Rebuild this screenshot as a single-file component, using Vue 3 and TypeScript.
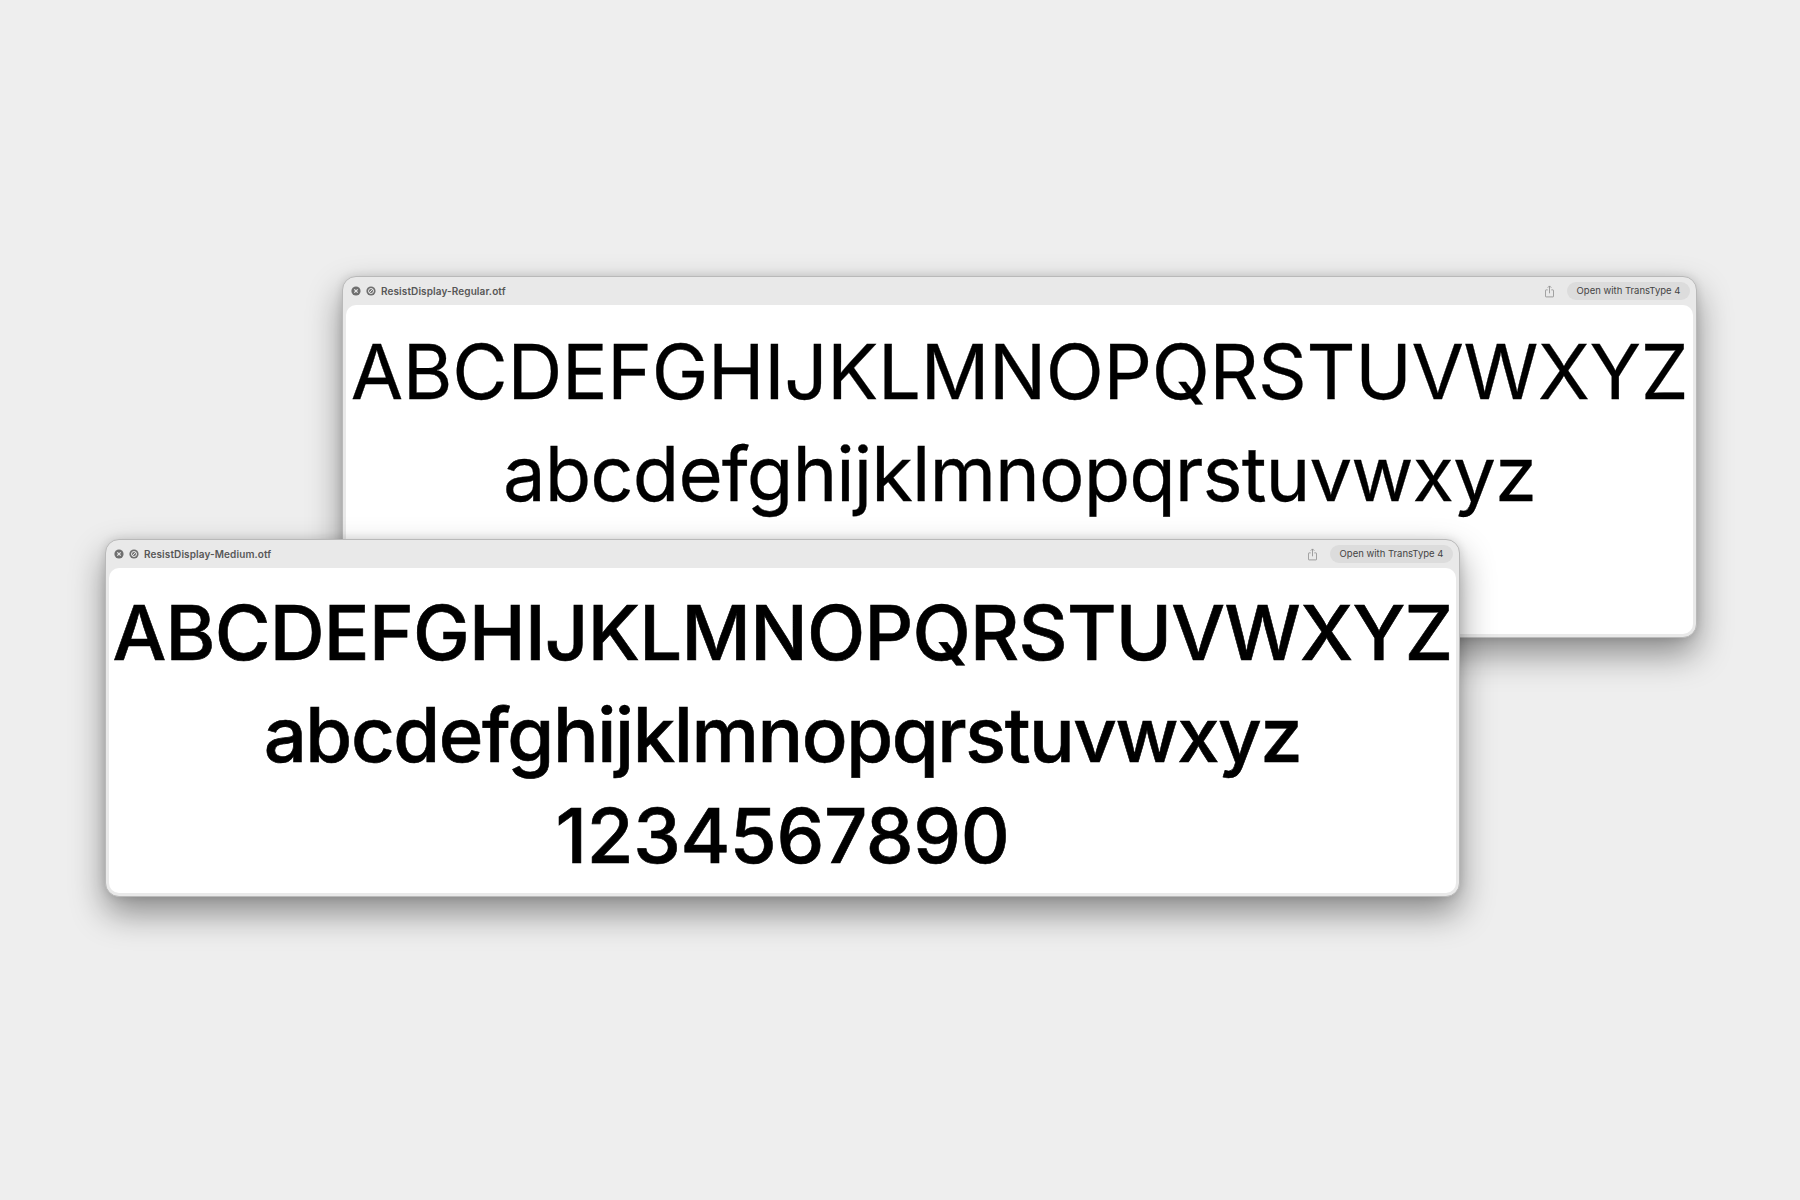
<script setup lang="ts">
interface FontWindow {
  file: string
  kind: string
  digits: boolean
}
const windows: FontWindow[] = [
  { file: 'ResistDisplay-Regular.otf', kind: 'regular', digits: false },
  { file: 'ResistDisplay-Medium.otf', kind: 'medium', digits: true },
]
</script>

<template>
  <main class="desk">
    <section v-for="w in windows" :key="w.file" class="window" :class="w.kind">
      <header class="bar">
        <svg class="ctl" viewBox="0 0 10 10">
          <circle cx="5" cy="5" r="4.6" fill="#6f6f6f" />
          <path d="M3.3 3.3l3.4 3.4M6.7 3.3l-3.4 3.4" stroke="#e8e8e8" stroke-width="1.2" fill="none" />
        </svg>
        <svg class="ctl" viewBox="0 0 10 10">
          <circle cx="5" cy="5" r="4.6" fill="#6f6f6f" />
          <circle cx="5" cy="5" r="2.5" stroke="#e8e8e8" stroke-width="1" fill="none" />
          <path d="M3.2 6.8l3.6-3.6" stroke="#e8e8e8" stroke-width="1" fill="none" />
        </svg>
        <span class="name">{{ w.file }}</span>
        <svg class="share" viewBox="0 0 10 14">
          <path d="M3 5.2H1.2a.7.7 0 0 0-.7.7v6.4a.7.7 0 0 0 .7.7h7.6a.7.7 0 0 0 .7-.7V5.9a.7.7 0 0 0-.7-.7H7" fill="none" stroke="#8c8c8c" stroke-width=".9" />
          <path d="M5 9V1M3 2.8L5 .8l2 2" fill="none" stroke="#8c8c8c" stroke-width=".9" />
        </svg>
        <span class="open">Open with TransType 4</span>
      </header>
      <div class="sheet">
        <p class="line upper">ABCDEFGHIJKLMNOPQRSTUVWXYZ</p>
        <p class="line lower">abcdefghijklmnopqrstuvwxyz</p>
        <p v-if="w.digits" class="line digits">1234567890</p>
      </div>
    </section>
  </main>
</template>

<style scoped>
.desk {
  position: relative;
  width: 1800px;
  height: 1200px;
  overflow: hidden;
  background: #eeeeee;
  font-family: Inter, "Liberation Sans", sans-serif;
}
.window {
  position: absolute;
  box-sizing: border-box;
  width: 1355px;
  height: 362px;
  display: flex;
  flex-direction: column;
  background: #e9e9e9;
  border: 1px solid #b9b9b9;
  border-radius: 14px;
  box-shadow: 0 16px 34px rgba(0, 0, 0, 0.42), 0 0 10px rgba(0, 0, 0, 0.12);
}
.regular { left: 342px; top: 276px; }
.medium { left: 105px; top: 539px; height: 358px; }
.bar {
  flex: none;
  box-sizing: border-box;
  height: 28px;
  display: flex;
  align-items: center;
  padding: 0 6px 0 8px;
}
.ctl {
  width: 10px;
  height: 10px;
  margin-right: 5px;
}
.name {
  font-size: 10px;
  font-weight: 600;
  color: #575757;
  letter-spacing: 0.1px;
}
.share {
  width: 9px;
  height: 13px;
  margin-left: auto;
  margin-right: 13px;
}
.open {
  width: 123px;
  height: 18px;
  line-height: 18px;
  border-radius: 9px;
  background: #dcdcdc;
  text-align: center;
  font-size: 9.5px;
  color: #444444;
}
.sheet {
  flex: 1;
  min-height: 0;
  margin: 0 3px 3px;
  padding-top: 15px;
  background: #ffffff;
  border-radius: 10px;
  display: flex;
  flex-direction: column;
  align-items: center;
  color: #000000;
  overflow: hidden;
}
.medium .sheet { padding-top: 13px; }
.line {
  margin: 0;
  font-size: 76px;
  line-height: 102px;
  white-space: nowrap;
}
.regular .line {
  font-weight: 400;
  -webkit-text-stroke: 0.3px #000000;
}
.medium .line {
  font-weight: 500;
  -webkit-text-stroke: 0.6px #000000;
}
.regular .upper { letter-spacing: -0.35px; }
.regular .lower { letter-spacing: -0.95px; }
.medium .upper { letter-spacing: -0.75px; }
.medium .lower { letter-spacing: -1.45px; }
.digits {
  letter-spacing: -0.4px;
  margin-top: -1px;
}
</style>
